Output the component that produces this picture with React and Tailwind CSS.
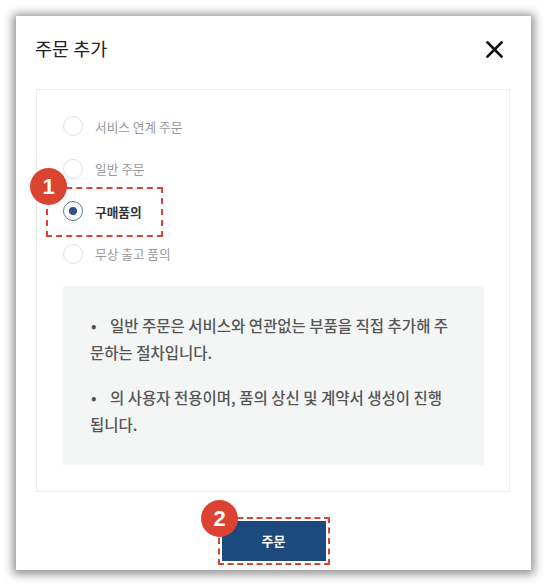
import React from "react";

const font = { fontFamily: '"Noto Sans CJK KR", "Noto Sans", sans-serif' };

function Radio({ label, checked }) {
  return (
    <div className="flex h-[42.5px] items-center gap-[12px]">
      {checked ? (
        <span className="flex h-[20px] w-[20px] items-center justify-center rounded-full border-[1.5px] border-[#5b76a0] bg-white">
          <span className="h-[8px] w-[8px] rounded-full bg-[#2f4f86]" />
        </span>
      ) : (
        <span className="h-[20px] w-[20px] rounded-full border-[1.5px] border-[#dde0e4] bg-white" />
      )}
      <span
        className={
          checked
            ? "text-[12.7px] font-bold text-[#333]"
            : "text-[12.7px] text-[#999]"
        }
      >
        {label}
      </span>
    </div>
  );
}

function Badge({ n, className }) {
  return (
    <div
      className={
        "absolute flex h-[37px] w-[37px] items-center justify-center rounded-full bg-[#da4331] text-[22px] font-bold leading-none text-white " +
        className
      }
      style={{ fontFamily: '"Liberation Sans", Arial, sans-serif' }}
    >
      {n}
    </div>
  );
}

export default function App() {
  return (
    <div className="h-[587px] w-[547px] bg-white pl-[16px] pt-[16px]" style={font}>
      <div className="relative h-[554px] w-[515px] bg-white shadow-[0_1px_9px_3px_rgba(0,0,0,0.45)]">
        <div className="flex h-[66px] items-center justify-between pl-[19px] pr-[28px]">
          <span className="text-[18.5px] text-[#222]">주문 추가</span>
          <svg width="17" height="17" viewBox="0 0 17 17">
            <path d="M1.5 1.5L15.5 15.5M15.5 1.5L1.5 15.5" stroke="#111" strokeWidth="2.6" strokeLinecap="square" />
          </svg>
        </div>
        <div className="ml-[20px] mt-[7px] h-[403px] w-[474px] border border-[#ececec] px-[26px] pt-[15px]">
          <Radio label="서비스 연계 주문" />
          <Radio label="일반 주문" />
          <Radio label="구매품의" checked />
          <Radio label="무상 출고 품의" />
          <div className="mt-[11px] h-[179px] w-[421px] bg-[#f4f6f6] pl-[27px] pr-[10px] pt-[26px] text-[15.5px] font-medium leading-[27px] text-[#555]">
            <p className="whitespace-nowrap">
              <span className="inline-block w-[20px] pl-[1px]">•</span>
              일반 주문은 서비스와 연관없는 부품을 직접 추가해 주
              <br />
              문하는 절차입니다.
            </p>
            <p className="mt-[18px] whitespace-nowrap">
              <span className="inline-block w-[20px] pl-[1px]">•</span>
              의 사용자 전용이며, 품의 상신 및 계약서 생성이 진행
              <br />
              됩니다.
            </p>
          </div>
        </div>
        <div className="mt-[25px] flex justify-center">
          <div className="border-2 border-dashed border-[#da4331] p-[2px]">
            <div className="flex h-[40px] w-[104px] items-center justify-center bg-[#1d4a7e] text-[13px] font-bold text-white">
              주문
            </div>
          </div>
        </div>

        <div className="absolute left-[30px] top-[171px] h-[50px] w-[117px] border-[2.5px] border-dashed border-[#da4331]" />
        <Badge n="1" className="left-[14px] top-[152px]" />
        <Badge n="2" className="left-[185px] top-[484px]" />
      </div>
    </div>
  );
}
